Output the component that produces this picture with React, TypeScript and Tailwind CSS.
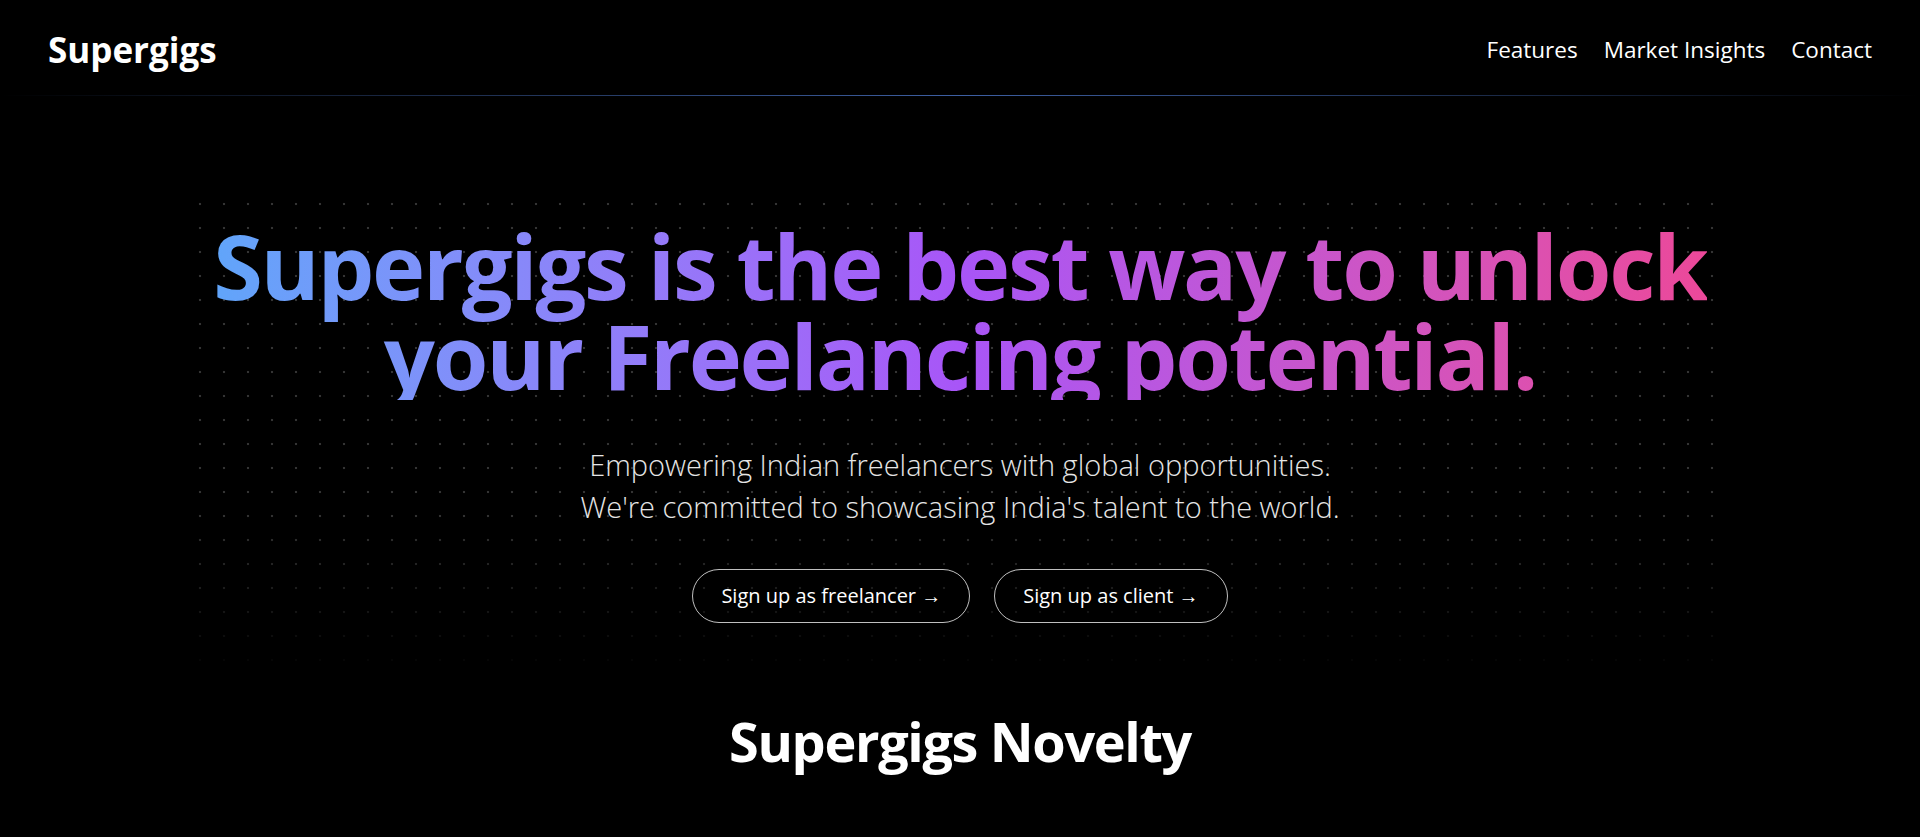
const navLinks = ['Features', 'Market Insights', 'Contact'];

export default function App() {
  return (
    <div className="min-h-screen bg-black text-white font-['Open_Sans','Noto_Sans',sans-serif]">
      {/* Navbar */}
      <header>
        <div className="flex h-[95px] items-center justify-between px-12 pt-[5px]">
          <a href="#" className="text-[35px] font-bold">
            Supergigs
          </a>
          <nav className="flex items-center gap-[26px]">
            {navLinks.map((link) => (
              <a key={link} href="#" className="text-[22.5px] font-normal">
                {link}
              </a>
            ))}
          </nav>
        </div>
        <div className="h-px bg-gradient-to-r from-transparent via-[#3d5fa3] to-transparent" />
      </header>

      {/* Hero */}
      <section className="relative mx-auto mt-[100px] max-w-screen-2xl pb-14 pt-6">
        <div className="pointer-events-none absolute inset-0 bg-[radial-gradient(circle_at_8px_8px,#343434_1px,transparent_1.6px)] bg-[size:24px_24px] [mask-image:linear-gradient(to_bottom,black_65%,transparent_100%)]" />

        <div className="relative flex flex-col items-center text-center">
          <h1 className="bg-gradient-to-r from-[#60a5fa] via-[#a855f7] to-[#ec4899] bg-clip-text text-[90px] font-bold leading-[90px] tracking-tight text-transparent">
            Supergigs is the best way to unlock
            <br />
            your Freelancing potential.
          </h1>

          <p className="mt-11 text-[29px] font-light leading-[42px] text-neutral-200">
            Empowering Indian freelancers with global opportunities.
            <br />
            We're committed to showcasing India's talent to the world.
          </p>

          <div className="mt-[41px] flex items-center gap-6">
            <a
              href="#"
              className="flex h-[54px] items-center rounded-full border border-white/75 px-[28px] text-[20px]"
            >
              Sign up as freelancer →
            </a>
            <a
              href="#"
              className="flex h-[54px] items-center rounded-full border border-white/75 px-[28px] text-[20px]"
            >
              Sign up as client →
            </a>
          </div>
        </div>
      </section>

      {/* Novelty */}
      <section className="pt-[22px]">
        <h2 className="text-center text-[54px] font-bold tracking-tight">Supergigs Novelty</h2>
      </section>
    </div>
  );
}
